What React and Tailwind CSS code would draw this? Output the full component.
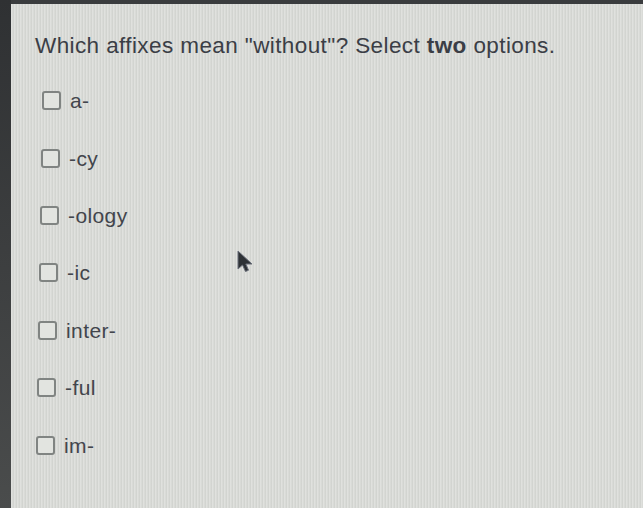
import React from 'react';

const options = [
  { label: 'a-', indent: 'pl-[31px]' },
  { label: '-cy', indent: 'pl-[30px]' },
  { label: '-ology', indent: 'pl-[29px]' },
  { label: '-ic', indent: 'pl-[28px]' },
  { label: 'inter-', indent: 'pl-[27px]' },
  { label: '-ful', indent: 'pl-[26px]' },
  { label: 'im-', indent: 'pl-[25px]' },
];

function Cursor() {
  return (
    <svg width="24" height="26" viewBox="0 0 24 26" className="absolute left-[236px] top-[249px]">
      <path d="M2 2 L2 20 L6.5 16 L9.5 22.5 L12.5 21.2 L9.8 15 L16 15 Z" fill="#2e3236" stroke="#6a6f7a" strokeWidth="1" />
    </svg>
  );
}

export default function App() {
  return (
    <div className="relative flex h-[508px] w-[643px] bg-[#3a3c3e] font-['Liberation_Sans',Arial,sans-serif]">
      <div className="w-[11px] shrink-0 bg-gradient-to-b from-[#2f3133] to-[#4a4c4c]" />
      <div className="flex-1 mt-[4px] bg-[#d9dbd7] bg-[repeating-linear-gradient(90deg,rgba(255,255,255,0.18)_0px,rgba(255,255,255,0.18)_1px,rgba(0,0,0,0.03)_2px,rgba(0,0,0,0.03)_3px)] text-[#3b3e46]">
        <h1 className="pl-[24px] pt-[28px] text-[22.5px] leading-[28px] tracking-[0.4px]">
          Which affixes mean "without"? Select <span className="font-bold">two</span> options.
        </h1>
        <div className="mt-[12px] flex flex-col">
          {options.map((o) => (
            <label key={o.label} className={`flex h-[57.4px] items-center gap-[9px] ${o.indent}`}>
              <span className="h-[19px] w-[19px] rounded-[3px] border-2 border-[#808482] bg-[#e2e4e0]" />
              <span className="text-[21px] leading-none tracking-[0.4px] text-[#42454c]">{o.label}</span>
            </label>
          ))}
        </div>
      </div>
      <Cursor />
    </div>
  );
}
